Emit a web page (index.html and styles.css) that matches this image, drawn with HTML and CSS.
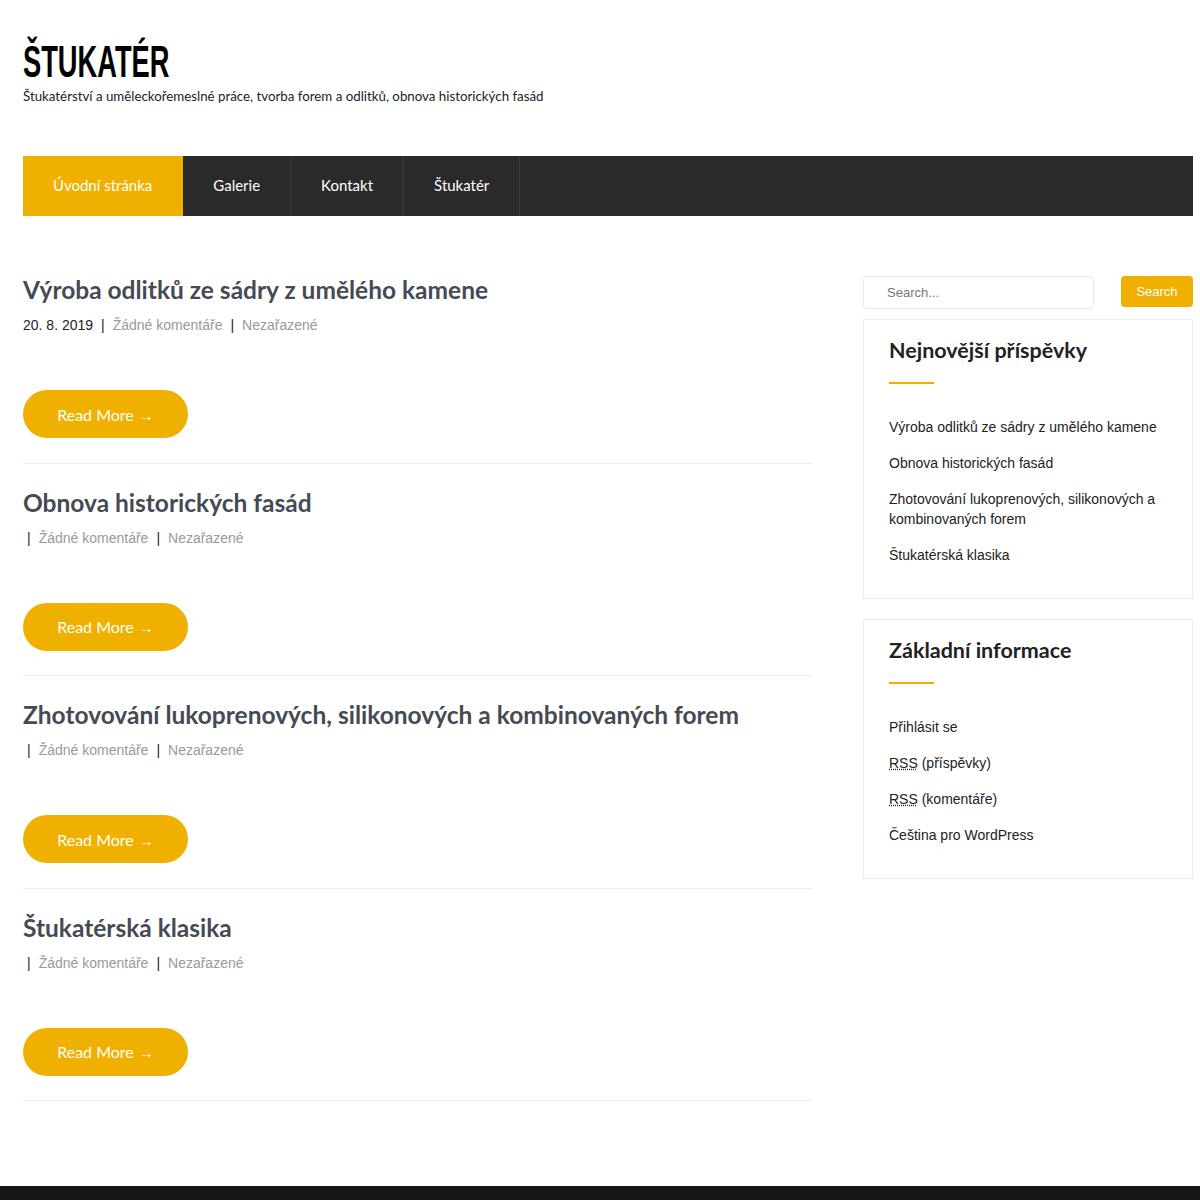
FILE: index.html
```html
<!DOCTYPE html>
<html lang="cs">
<head>
  <meta charset="UTF-8">
  <meta name="viewport" content="width=device-width, initial-scale=1.0">
  <title>Štukatér</title>
  <link rel="stylesheet" href="styles.css">
</head>
<body>
  <header class="site-header">
    <h1 class="site-title">ŠTUKATÉR</h1>
    <p class="site-desc">Štukatérství a uměleckořemeslné práce, tvorba forem a odlitků, obnova historických fasád</p>
  </header>

  <nav class="main-nav">
    <a href="#" class="active">Úvodní stránka</a>
    <a href="#">Galerie</a>
    <a href="#">Kontakt</a>
    <a href="#">Štukatér</a>
  </nav>

  <div class="container">
    <main class="posts">
      <article class="post">
        <h2>Výroba odlitků ze sádry z umělého kamene</h2>
        <p class="meta"><span class="date">20. 8. 2019</span><span class="sep">|</span><a href="#">Žádné komentáře</a><span class="sep">|</span><a href="#">Nezařazené</a></p>
        <a href="#" class="read-more">Read More <span class="arrow">&rarr;</span></a>
      </article>
      <article class="post">
        <h2>Obnova historických fasád</h2>
        <p class="meta"><span class="sep first">|</span><a href="#">Žádné komentáře</a><span class="sep">|</span><a href="#">Nezařazené</a></p>
        <a href="#" class="read-more">Read More <span class="arrow">&rarr;</span></a>
      </article>
      <article class="post">
        <h2>Zhotovování lukoprenových, silikonových a kombinovaných forem</h2>
        <p class="meta"><span class="sep first">|</span><a href="#">Žádné komentáře</a><span class="sep">|</span><a href="#">Nezařazené</a></p>
        <a href="#" class="read-more">Read More <span class="arrow">&rarr;</span></a>
      </article>
      <article class="post">
        <h2>Štukatérská klasika</h2>
        <p class="meta"><span class="sep first">|</span><a href="#">Žádné komentáře</a><span class="sep">|</span><a href="#">Nezařazené</a></p>
        <a href="#" class="read-more">Read More <span class="arrow">&rarr;</span></a>
      </article>
    </main>

    <aside class="sidebar">
      <form class="search-form" onsubmit="return false">
        <input type="text" placeholder="Search...">
        <button type="submit">Search</button>
      </form>

      <div class="widget">
        <h3>Nejnovější příspěvky</h3>
        <ul>
          <li><a href="#">Výroba odlitků ze sádry z umělého kamene</a></li>
          <li><a href="#">Obnova historických fasád</a></li>
          <li><a href="#">Zhotovování lukoprenových, silikonových a kombinovaných forem</a></li>
          <li><a href="#">Štukatérská klasika</a></li>
        </ul>
      </div>

      <div class="widget">
        <h3>Základní informace</h3>
        <ul>
          <li><a href="#">Přihlásit se</a></li>
          <li><a href="#"><abbr title="Really Simple Syndication">RSS</abbr> (příspěvky)</a></li>
          <li><a href="#"><abbr title="Really Simple Syndication">RSS</abbr> (komentáře)</a></li>
          <li><a href="#">Čeština pro WordPress</a></li>
        </ul>
      </div>
    </aside>
  </div>

  <footer class="site-footer"></footer>
</body>
</html>
```

FILE: styles.css
```css
body {
  margin: 0;
  padding: 0;
  background: #fff;
  font-family: "Liberation Sans", Arial, sans-serif;
  color: #222;
}

a {
  text-decoration: none;
  color: inherit;
}

/* Header */
.site-header {
  padding: 40px 0 0 23px;
  height: 116px;
  box-sizing: border-box;
}

.site-title {
  display: inline-block;
  margin: 0;
  font-family: "Liberation Sans", Arial, sans-serif;
  font-weight: bold;
  font-size: 44px;
  line-height: 44px;
  color: #000;
  transform: scaleX(0.62);
  transform-origin: left center;
}

.site-desc {
  margin: 4px 0 0;
  font-family: Lato, "Open Sans", sans-serif;
  font-size: 13.3px;
  color: #222;
}

/* Navigation */
.main-nav {
  display: flex;
  margin: 40px 7px 0 23px;
  height: 60px;
  background: #2a2a2a;
}

.main-nav a {
  display: flex;
  align-items: center;
  padding: 0 30px 2px;
  border-right: 1px solid #3a3a3a;
  font-family: Lato, "Open Sans", sans-serif;
  font-size: 15px;
  color: #fff;
}

.main-nav a.active {
  background: #f0b000;
  border-right-color: #f0b000;
}

/* Layout */
.container {
  display: flex;
  justify-content: space-between;
  margin: 59px 7px 0 23px;
}

.posts {
  width: 789px;
}

.post {
  border-bottom: 1px solid #eee;
  padding-bottom: 24.5px;
  margin-bottom: 24px;
}

.post h2 {
  margin: 0;
  font-family: Lato, "Open Sans", sans-serif;
  font-weight: bold;
  font-size: 24.5px;
  line-height: 30px;
  color: #454a54;
}

.meta {
  margin: 11px 0 0;
  font-size: 14px;
  line-height: 18px;
  color: #999;
}

.meta .date {
  color: #222;
}

.meta .sep {
  color: #222;
  margin: 0 8px;
}

.meta .sep.first {
  margin-left: 4px;
}

.read-more {
  display: inline-flex;
  align-items: center;
  justify-content: center;
  margin-top: 56px;
  width: 165px;
  height: 48px;
  border-radius: 24px;
  background: #f0b000;
  font-family: Lato, "Open Sans", sans-serif;
  font-size: 16px;
  color: #fff;
}

.read-more .arrow {
  font-family: "Liberation Sans", Arial, sans-serif;
  font-size: 15px;
  margin-left: 5px;
  padding-top: 2px;
}

/* Sidebar */
.sidebar {
  width: 330px;
  padding-top: 1px;
}

.search-form {
  display: flex;
  justify-content: space-between;
  margin-bottom: 10px;
}

.search-form input {
  width: 231px;
  height: 33px;
  box-sizing: border-box;
  border: 1px solid #e8e8e8;
  border-radius: 4px;
  padding: 0 23px;
  font-family: "Liberation Sans", Arial, sans-serif;
  font-size: 13px;
  color: #555;
}

.search-form input::placeholder {
  color: #777;
}

.search-form button {
  width: 72px;
  height: 31px;
  border: none;
  border-radius: 4px;
  background: #f0b000;
  color: #fff;
  font-family: "Liberation Sans", Arial, sans-serif;
  font-size: 13px;
}

.widget {
  border: 1px solid #ececec;
  padding: 16px 25px 17px;
  margin-bottom: 20px;
}

.widget h3 {
  margin: 0;
  font-family: Lato, "Open Sans", sans-serif;
  font-weight: bold;
  font-size: 21.5px;
  line-height: 28px;
  color: #222;
}

.widget h3::after {
  content: "";
  display: block;
  width: 45px;
  height: 2px;
  background: #f0b000;
  margin-top: 18px;
}

.widget ul {
  list-style: none;
  margin: 33px 0 0;
  padding: 0;
}

.widget li {
  font-size: 14px;
  line-height: 20px;
  margin-bottom: 16px;
  color: #222;
}

.widget abbr {
  text-decoration: underline dotted;
}

/* Footer */
.site-footer {
  margin-top: 61px;
  height: 60px;
  background: #161616;
}
```
